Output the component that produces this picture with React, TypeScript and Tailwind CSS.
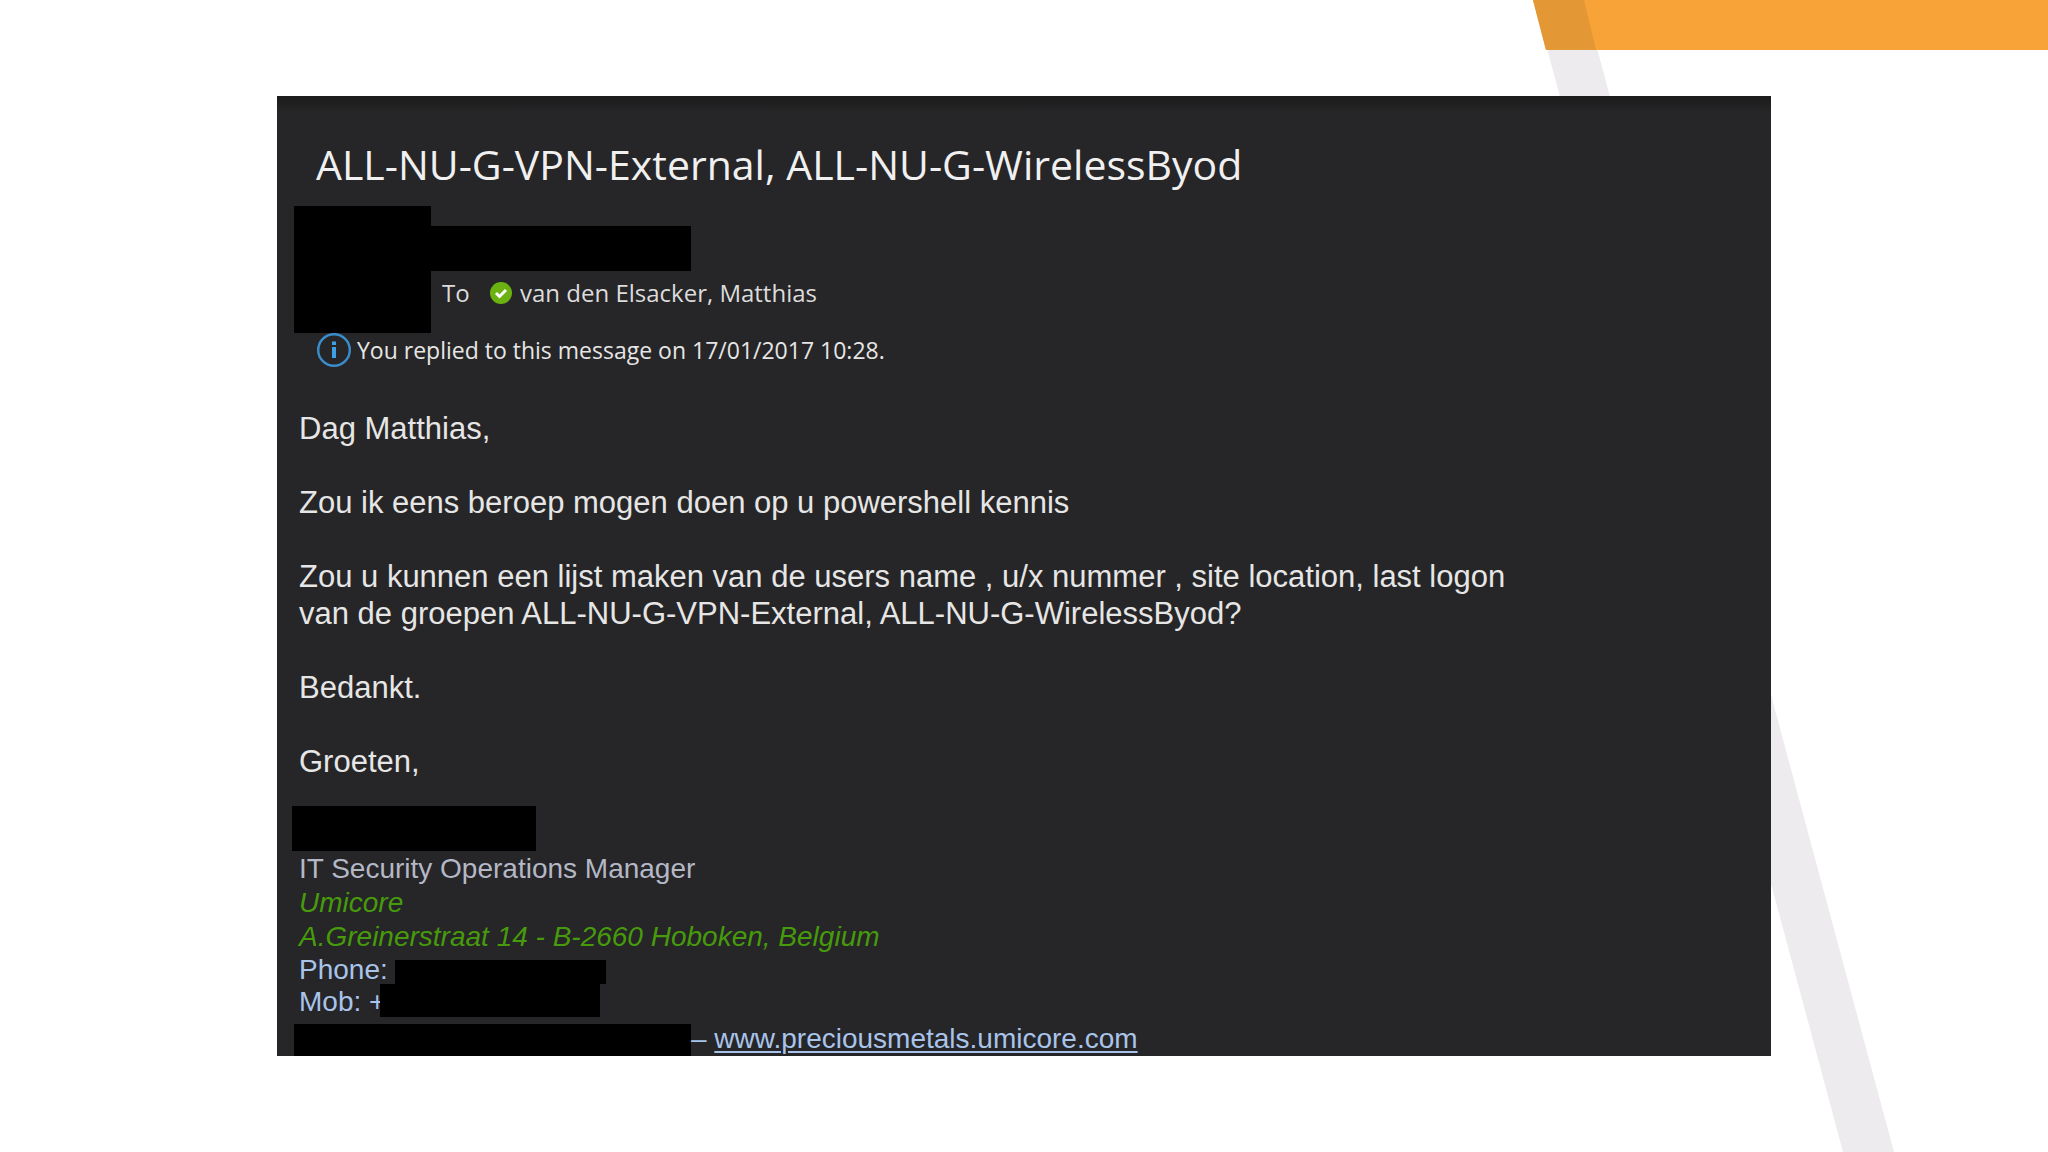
import type { ReactNode } from "react";

const SUBJECT = "ALL-NU-G-VPN-External, ALL-NU-G-WirelessByod";

export default function App() {
  return (
    <div className="relative min-h-screen bg-white">
      <Backdrop />
      <main className="relative px-[277px] py-24">
        <article className="overflow-hidden bg-[#262527] font-['Liberation_Sans',Arial,sans-serif] text-[#e6e6e6]">
          <div className="h-4 bg-linear-to-b from-[#1b1b1b] to-[#262527]" />
          <MessageHeader />
          <MessageBody />
          <Signature />
        </article>
      </main>
    </div>
  );
}

// slide decoration: grey diagonal with the orange corner over it
function Backdrop() {
  return (
    <svg
      className="absolute inset-0 h-full w-full"
      viewBox="0 0 2048 1152"
      preserveAspectRatio="none"
      aria-hidden="true"
    >
      <polygon points="1534,0 1584,0 1894,1152 1843,1152" fill="#edebee" />
      <polygon points="1533,0 2048,0 2048,50 1546,50" fill="#f7a337" />
      <polygon points="1533,0 1584,0 1596,50 1546,50" fill="#e39735" />
    </svg>
  );
}

function MessageHeader() {
  return (
    <header className="font-['Open_Sans','Noto_Sans',sans-serif]">
      <h1 className="px-[39px] pt-6 text-[41px] leading-[56px] text-[#f0f0f0]">
        {SUBJECT}
      </h1>
      <div className="mt-[14px] flex pl-[17px]">
        <div className="h-[127px] w-[137px] bg-black" />
        <div className="pt-5">
          <div className="h-[45px] w-[260px] bg-black" />
          <p className="flex items-center pt-[5px] pl-[11px] text-[24px] leading-[34px] text-[#dcdcdc]">
            <span className="w-12">To</span>
            <PresenceIcon />
            <span className="pl-2">van den Elsacker, Matthias</span>
          </p>
        </div>
      </div>
      <p className="flex items-center gap-[6px] pl-10 text-[23px] leading-[34px] text-[#e6e6e6]">
        <InfoIcon />
        You replied to this message on 17/01/2017 10:28.
      </p>
    </header>
  );
}

function MessageBody() {
  return (
    <div className="px-[22px] pt-[43px] text-[31px] leading-[37px]">
      <p>Dag Matthias,</p>
      <p className="mt-[37px]">
        Zou ik eens beroep mogen doen op u powershell kennis
      </p>
      <p className="mt-[37px]">
        Zou u kunnen een lijst maken van de users name , u/x nummer , site
        location, last logon
        <br />
        van de groepen {SUBJECT}?
      </p>
      <p className="mt-[37px]">Bedankt.</p>
      <p className="mt-[37px]">Groeten,</p>
    </div>
  );
}

function Signature() {
  return (
    <footer className="pt-[26px] text-[28px] leading-[34px] text-[#a9c4ea]">
      <div className="ml-[15px] h-[45px] w-[244px] bg-black" />
      <div className="pt-px pl-[22px]">
        <p className="text-[#b4b8c6]">IT Security Operations Manager</p>
        <address className="text-[#469a0c]">
          Umicore
          <br />
          A.Greinerstraat 14 - B-2660 Hoboken, Belgium
        </address>
        <ContactLine label="Phone:">
          <span className="mt-[6px] ml-[7px] h-6 w-[211px] bg-black" />
        </ContactLine>
        <ContactLine label="Mob: +">
          <span className="-mt-[2px] -ml-[5px] h-[33px] w-[220px] bg-black" />
        </ContactLine>
      </div>
      <p className="flex h-[38px] items-end pl-[17px]">
        <span className="h-8 w-[397px] bg-black" />
        <span>
          –{" "}
          <a
            href="http://www.preciousmetals.umicore.com"
            className="underline decoration-2 underline-offset-3"
          >
            www.preciousmetals.umicore.com
          </a>
        </span>
      </p>
    </footer>
  );
}

function ContactLine({
  label,
  children,
}: {
  label: string;
  children: ReactNode;
}) {
  return (
    <p className="flex h-8 items-start leading-8">
      {label}
      {children}
    </p>
  );
}

function PresenceIcon() {
  return (
    <svg className="size-[22px]" viewBox="0 0 22 22" aria-hidden="true">
      <circle cx="11" cy="11" r="11" fill="#6bb110" />
      <path
        d="M6 11l3.5 3.5L16 8"
        fill="none"
        stroke="#fff"
        strokeWidth="3"
      />
    </svg>
  );
}

function InfoIcon() {
  return (
    <svg className="size-[34px]" viewBox="0 0 34 34" aria-hidden="true">
      <circle
        cx="17"
        cy="17"
        r="15.8"
        fill="none"
        stroke="#3a8dcb"
        strokeWidth="2.4"
      />
      <path d="M15 8.5h4v3.5h-4zM15 14h4v11h-4z" fill="#3f9fe0" />
    </svg>
  );
}
